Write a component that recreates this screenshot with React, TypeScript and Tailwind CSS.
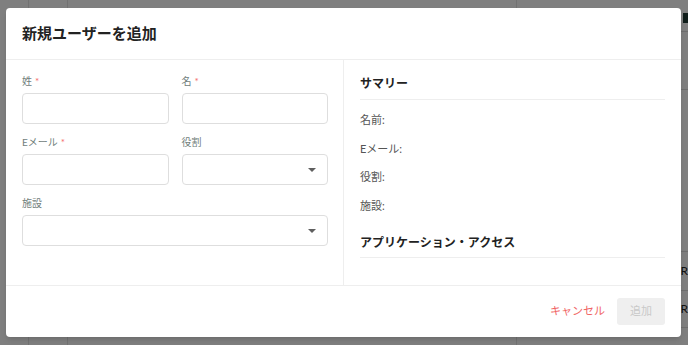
import React from 'react';

const font = { fontFamily: 'Lato, "Noto Sans CJK JP", sans-serif' };

// rows of the page sitting behind the dialog overlay
const pageRows = [
  { h: 'h-[32px]', label: '', mark: true },
  { h: 'h-[58px]', label: '' },
  { h: 'h-[162px]', label: '' },
  { h: 'h-[39px]', label: 'R' },
  { h: 'h-[37px]', label: 'R' },
];

const Field = ({ label, required, select }: { label: string; required?: boolean; select?: boolean }) => (
  <div className="flex flex-col gap-[5px]">
    <div className="flex items-center gap-[3px] text-[10px] leading-[14px] text-[#71807b]">
      <span>{label}</span>
      {required && <span className="text-[#f46b6b] text-[10px] leading-[14px]">*</span>}
    </div>
    <div className="h-[31px] rounded-[4px] border border-[#dedede] bg-white flex items-center justify-end pr-[11px]">
      {select && (
        <svg width="8" height="4" viewBox="0 0 8 4">
          <path d="M0 0h8L4 4z" fill="#5f5f5f" />
        </svg>
      )}
    </div>
  </div>
);

const SummaryItem = ({ label }: { label: string }) => (
  <div className="h-[28.7px] flex items-center text-[11px] text-[#555]">{label}</div>
);

export default function App() {
  return (
    <div className="relative w-[688px] h-[345px] overflow-hidden bg-white" style={font}>
      {/* background page */}
      <div className="flex h-full">
        <div className="w-[29px] border-r border-[#e4e4e4]" />
        <div className="w-[39px] border-r border-[#e4e4e4]" />
        <div className="w-[449px] border-r border-[#e4e4e4]" />
        <div className="flex-1 flex flex-col">
          {pageRows.map((r, i) => (
            <div key={i} className={`${r.h} shrink-0 border-b border-[#dcdcdc] flex items-center justify-end text-[12px] text-[#222]`}>
              {r.label && <span>{r.label}</span>}
              {r.mark && <span className="w-[5px] h-[10px] bg-[#1f3b35] mt-[4px]" />}
            </div>
          ))}
        </div>
      </div>

      {/* overlay + dialog */}
      <div className="absolute inset-0 bg-black/50 pt-[8px] pl-[6px]">
        <div className="w-[675px] h-[329px] bg-white rounded-[4px] shadow-md flex flex-col">
          <div className="h-[52px] shrink-0 border-b border-[#eeeeee] flex items-center px-4">
            <h2 className="text-[15px] font-semibold text-[#222]">新規ユーザーを追加</h2>
          </div>

          <div className="flex h-[226px] border-b border-[#eeeeee]">
            <div className="w-[338px] shrink-0 border-r border-[#eeeeee] pl-4 pr-[15px] pt-[14px]">
              <div className="grid grid-cols-2 gap-x-[13px] gap-y-[11px]">
                <Field label="姓" required />
                <Field label="名" required />
                <Field label="Eメール" required />
                <Field label="役割" select />
                <div className="col-span-2">
                  <Field label="施設" select />
                </div>
              </div>
            </div>

            <div className="flex-1 px-4 pt-[15px]">
              <h3 className="text-[12px] font-bold text-[#222] pb-[6px] border-b border-[#eeeeee]">サマリー</h3>
              <div className="pt-[6px]">
                <SummaryItem label="名前:" />
                <SummaryItem label="Eメール:" />
                <SummaryItem label="役割:" />
                <SummaryItem label="施設:" />
              </div>
              <h3 className="mt-[13px] text-[12px] font-bold text-[#222] pb-[5px] border-b border-[#eeeeee]">
                アプリケーション・アクセス
              </h3>
            </div>
          </div>

          <div className="flex-1 flex items-center justify-end gap-[12px] px-4">
            <button className="text-[11px] text-[#f06464]">キャンセル</button>
            <button className="w-[48px] h-[27px] rounded-[3px] bg-[#efefef] text-[11px] text-[#c9c9c9]">追加</button>
          </div>
        </div>
      </div>
    </div>
  );
}
